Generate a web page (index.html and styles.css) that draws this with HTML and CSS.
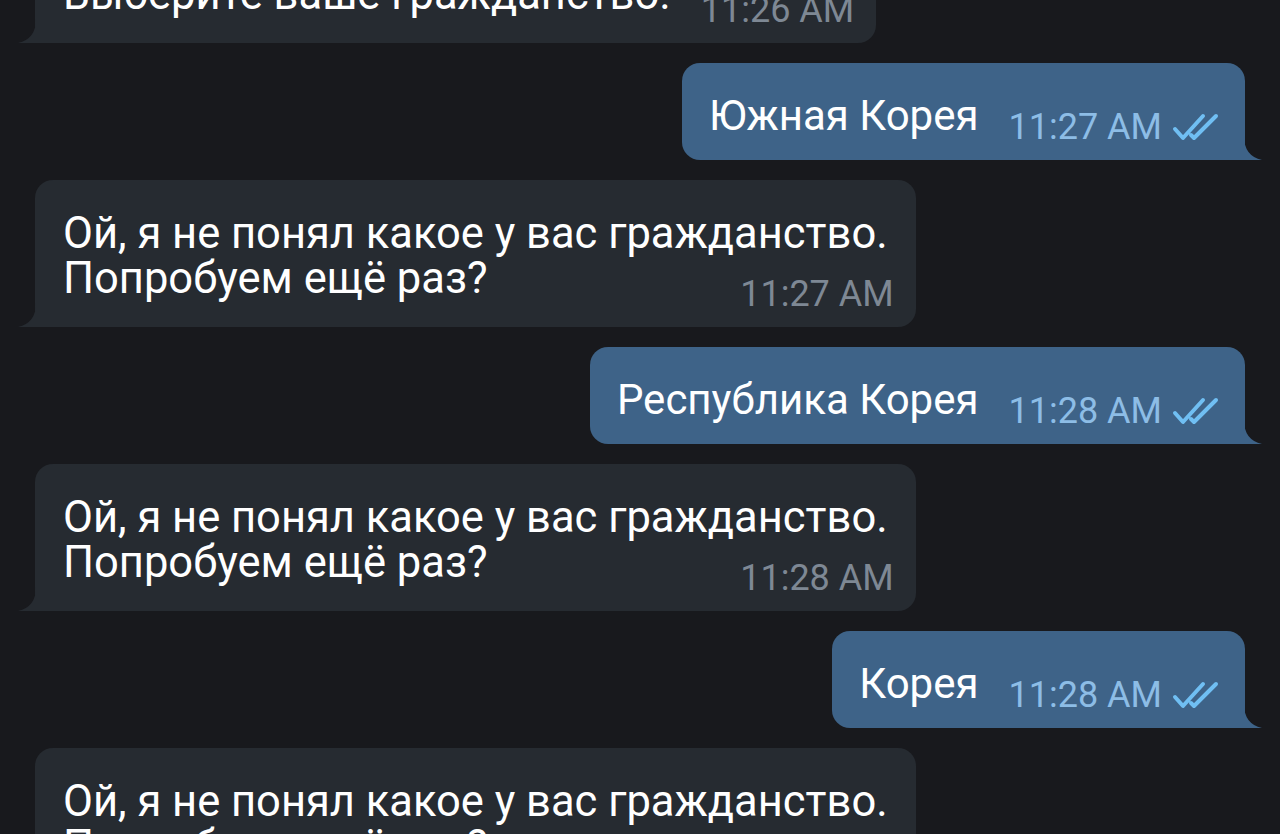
FILE: index.html
```html
<!DOCTYPE html>
<html lang="ru">
<head>
<meta charset="utf-8">
<title>Chat</title>
<link rel="stylesheet" href="styles.css">
</head>
<body>
<div class="chat">
  <div class="bubble in">
    <svg class="tail" viewBox="0 0 18 24" width="18" height="24"><path d="M18 0 Q18 20 0 24 L18 24 Z"/></svg>
    <span class="text">Выберите ваше гражданство.</span>
    <span class="time">11:26 AM</span>
  </div>
  <div class="bubble out">
    <svg class="tail" viewBox="0 0 18 24" width="18" height="24"><path d="M0 0 Q0 20 18 24 L0 24 Z"/></svg>
    <span class="text">Южная Корея</span>
    <span class="time">11:27 AM</span>
    <svg class="check" viewBox="0 0 50 30" width="50" height="30"><path d="M3 16 L11 25 L31 3 M19 22 L22 25 L44 3"/></svg>
  </div>
  <div class="bubble in wrap">
    <svg class="tail" viewBox="0 0 18 24" width="18" height="24"><path d="M18 0 Q18 20 0 24 L18 24 Z"/></svg>
    <span class="line1">Ой, я не понял какое у вас гражданство.</span>
    <div class="last">
      <span class="text">Попробуем ещё раз?</span>
      <span class="time">11:27 AM</span>
    </div>
  </div>
  <div class="bubble out">
    <svg class="tail" viewBox="0 0 18 24" width="18" height="24"><path d="M0 0 Q0 20 18 24 L0 24 Z"/></svg>
    <span class="text">Республика Корея</span>
    <span class="time">11:28 AM</span>
    <svg class="check" viewBox="0 0 50 30" width="50" height="30"><path d="M3 16 L11 25 L31 3 M19 22 L22 25 L44 3"/></svg>
  </div>
  <div class="bubble in wrap">
    <svg class="tail" viewBox="0 0 18 24" width="18" height="24"><path d="M18 0 Q18 20 0 24 L18 24 Z"/></svg>
    <span class="line1">Ой, я не понял какое у вас гражданство.</span>
    <div class="last">
      <span class="text">Попробуем ещё раз?</span>
      <span class="time">11:28 AM</span>
    </div>
  </div>
  <div class="bubble out">
    <svg class="tail" viewBox="0 0 18 24" width="18" height="24"><path d="M0 0 Q0 20 18 24 L0 24 Z"/></svg>
    <span class="text">Корея</span>
    <span class="time">11:28 AM</span>
    <svg class="check" viewBox="0 0 50 30" width="50" height="30"><path d="M3 16 L11 25 L31 3 M19 22 L22 25 L44 3"/></svg>
  </div>
  <div class="bubble in wrap">
    <svg class="tail" viewBox="0 0 18 24" width="18" height="24"><path d="M18 0 Q18 20 0 24 L18 24 Z"/></svg>
    <span class="line1">Ой, я не понял какое у вас гражданство.</span>
    <div class="last">
      <span class="text">Попробуем ещё раз?</span>
      <span class="time">11:28 AM</span>
    </div>
  </div>
</div>
</body>
</html>
```

FILE: styles.css
```css
html, body {
  margin: 0;
  padding: 0;
}

body {
  background: #18191d;
  font-family: Roboto, "Noto Sans", sans-serif;
  height: 834px;
  overflow: hidden;
}

.chat {
  display: flex;
  flex-direction: column;
  gap: 20px;
  padding: 0 35px;
  margin-top: -59px;
}

.bubble {
  position: relative;
  display: flex;
  align-items: flex-end;
  border-radius: 18px;
  color: #ffffff;
}

.bubble.in {
  align-self: flex-start;
  background: #262b31;
  border-bottom-left-radius: 0;
  padding: 31px 22px 15px 28px;
}

.bubble.out {
  align-self: flex-end;
  background: #3e6388;
  border-bottom-right-radius: 0;
  padding: 30px 23px 15px 27px;
}

.tail {
  position: absolute;
  bottom: 0;
}

.in .tail {
  left: -17px;
  fill: #262b31;
}

.out .tail {
  right: -17px;
  fill: #3e6388;
}

.text,
.line1 {
  line-height: 45px;
  white-space: nowrap;
}

.in .text,
.in .line1 {
  font-size: 43.5px;
}

.line1 {
  display: block;
  padding-right: 6px;
}

.in .text {
  margin-bottom: 11px;
}

.out .text {
  font-size: 42px;
  margin-bottom: 7px;
}

.time {
  font-size: 36px;
  line-height: 35px;
  margin-left: 30px;
  color: #7e8894;
  white-space: nowrap;
}

.out .time {
  color: #8dbde6;
}

.check {
  margin-left: 10px;
  margin-bottom: 2px;
  fill: none;
  stroke: #70bff3;
  stroke-width: 4;
  stroke-linecap: round;
  stroke-linejoin: round;
}

.bubble.wrap {
  flex-direction: column;
  align-items: stretch;
}

.last {
  display: flex;
  justify-content: space-between;
  align-items: flex-end;
}
```
